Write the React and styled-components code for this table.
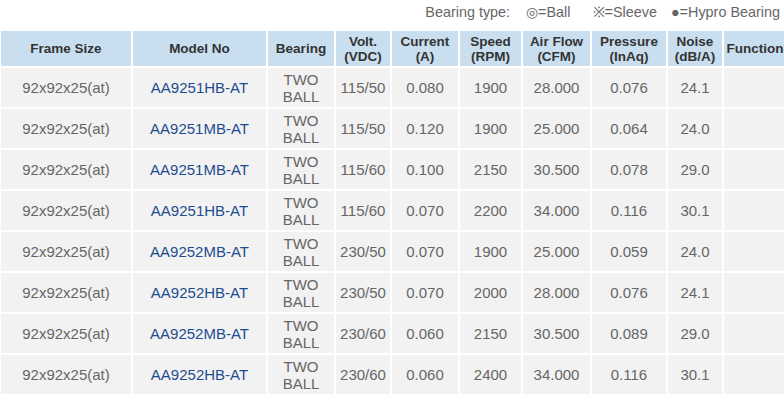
import React from "react";
import styled, { createGlobalStyle } from "styled-components";

const Global = createGlobalStyle`
  html, body { margin: 0; padding: 0; background: #fff; overflow: hidden; }
  body { font-family: "Liberation Sans", Arial, sans-serif; }
`;

const Page = styled.div`
  width: 784px;
  height: 394px;
  overflow: hidden;
`;

const Legend = styled.div`
  height: 29px;
  box-sizing: border-box;
  display: flex;
  justify-content: flex-end;
  align-items: flex-start;
  padding: 4px 4px 0 0;
  font-size: 14.4px;
  line-height: 17px;
  color: #666;
  white-space: nowrap;
`;

const LegendItem = styled.span`
  margin-left: ${(p) => p.$gap || 0}px;
`;

const Table = styled.table`
  border-collapse: separate;
  border-spacing: 2px;
  table-layout: fixed;
  width: 789px;
  margin: 0 0 0 -1px;
`;

const Th = styled.th`
  background: #c9dff0;
  color: #333;
  font-size: 13.5px;
  font-weight: bold;
  line-height: 15px;
  height: 35px;
  padding: 0;
  text-align: center;
  vertical-align: middle;
  white-space: nowrap;
`;

const Td = styled.td`
  background: #f2f2f2;
  color: ${(p) => (p.$link ? "#1e4d8f" : "#666")};
  font-size: 15px;
  line-height: 17px;
  height: 39px;
  padding: 0;
  text-align: center;
  vertical-align: middle;
  white-space: nowrap;
`;

const widths = [130, 133, 66, 54, 66, 61, 67, 74, 54, 62];

const headers = [
  ["Frame Size"],
  ["Model No"],
  ["Bearing"],
  ["Volt.", "(VDC)"],
  ["Current", "(A)"],
  ["Speed", "(RPM)"],
  ["Air Flow", "(CFM)"],
  ["Pressure", "(InAq)"],
  ["Noise", "(dB/A)"],
  ["Function"],
];

const rows = [
  ["AA9251HB-AT", "115/50", "0.080", "1900", "28.000", "0.076", "24.1"],
  ["AA9251MB-AT", "115/50", "0.120", "1900", "25.000", "0.064", "24.0"],
  ["AA9251MB-AT", "115/60", "0.100", "2150", "30.500", "0.078", "29.0"],
  ["AA9251HB-AT", "115/60", "0.070", "2200", "34.000", "0.116", "30.1"],
  ["AA9252MB-AT", "230/50", "0.070", "1900", "25.000", "0.059", "24.0"],
  ["AA9252HB-AT", "230/50", "0.070", "2000", "28.000", "0.076", "24.1"],
  ["AA9252MB-AT", "230/60", "0.060", "2150", "30.500", "0.089", "29.0"],
  ["AA9252HB-AT", "230/60", "0.060", "2400", "34.000", "0.116", "30.1"],
];

const Lines = ({ lines }) =>
  lines.map((l, i) => (
    <React.Fragment key={i}>
      {i > 0 && <br />}
      {l}
    </React.Fragment>
  ));

export default function App() {
  return (
    <Page>
      <Global />
      <Legend>
        <LegendItem>Bearing type:</LegendItem>
        <LegendItem $gap={16}>◎=Ball</LegendItem>
        <LegendItem $gap={22}>※=Sleeve</LegendItem>
        <LegendItem $gap={14}>●=Hypro Bearing</LegendItem>
      </Legend>
      <Table>
        <colgroup>
          {widths.map((w, i) => (
            <col key={i} style={{ width: w }} />
          ))}
        </colgroup>
        <thead>
          <tr>
            {headers.map((h, i) => (
              <Th key={i}>
                <Lines lines={h} />
              </Th>
            ))}
          </tr>
        </thead>
        <tbody>
          {rows.map((r, i) => (
            <tr key={i}>
              <Td>92x92x25(at)</Td>
              <Td $link>{r[0]}</Td>
              <Td>
                TWO
                <br />
                BALL
              </Td>
              <Td>{r[1]}</Td>
              <Td>{r[2]}</Td>
              <Td>{r[3]}</Td>
              <Td>{r[4]}</Td>
              <Td>{r[5]}</Td>
              <Td>{r[6]}</Td>
              <Td></Td>
            </tr>
          ))}
        </tbody>
      </Table>
    </Page>
  );
}
